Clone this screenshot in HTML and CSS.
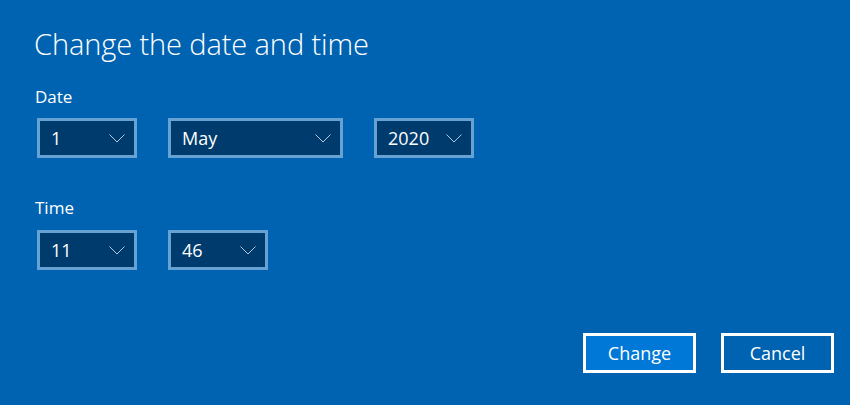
FILE: index.html
```html
<!DOCTYPE html>
<html lang="en">
<head>
<meta charset="utf-8">
<title>Change the date and time</title>
<link rel="stylesheet" href="styles.css">
</head>
<body>
<div class="dialog">
  <h1 class="title">Change the date and time</h1>
  <div class="label label-date">Date</div>
  <div class="row row-date">
    <div class="select w-day"><span>1</span><svg class="chev" width="16" height="9" viewBox="0 0 16 9"><polyline points="0.5,0.5 8,8 15.5,0.5"/></svg></div>
    <div class="select w-month"><span>May</span><svg class="chev" width="16" height="9" viewBox="0 0 16 9"><polyline points="0.5,0.5 8,8 15.5,0.5"/></svg></div>
    <div class="select w-year"><span>2020</span><svg class="chev" width="16" height="9" viewBox="0 0 16 9"><polyline points="0.5,0.5 8,8 15.5,0.5"/></svg></div>
  </div>
  <div class="label label-time">Time</div>
  <div class="row row-time">
    <div class="select w-day"><span>11</span><svg class="chev" width="16" height="9" viewBox="0 0 16 9"><polyline points="0.5,0.5 8,8 15.5,0.5"/></svg></div>
    <div class="select w-day"><span>46</span><svg class="chev" width="16" height="9" viewBox="0 0 16 9"><polyline points="0.5,0.5 8,8 15.5,0.5"/></svg></div>
  </div>
  <div class="actions">
    <button class="btn btn-primary">Change</button>
    <button class="btn">Cancel</button>
  </div>
</div>
</body>
</html>
```
FILE: styles.css
```css
html, body {
  margin: 0;
  padding: 0;
  background: #0063b1;
}
body {
  width: 850px;
  height: 405px;
  overflow: hidden;
  font-family: "Open Sans", "Noto Sans", "Liberation Sans", sans-serif;
  color: #ffffff;
}
.dialog {
  box-sizing: border-box;
  height: 405px;
  padding: 24px 16px 32px 37px;
  display: flex;
  flex-direction: column;
}
.title {
  margin: 0 0 0 -3px;
  font-size: 29px;
  font-weight: 300;
  line-height: 40px;
  letter-spacing: -0.1px;
}
.label {
  margin-left: -2px;
  font-size: 17px;
  line-height: 24px;
}
.label-date {
  margin-top: 21px;
}
.label-time {
  margin-top: 38px;
}
.row {
  display: flex;
  gap: 31px;
}
.row-date {
  margin-top: 9px;
}
.row-time {
  margin-top: 10px;
}
.select {
  box-sizing: border-box;
  height: 40px;
  border: 3px solid #67a2d5;
  background: #003b6d;
  display: flex;
  align-items: center;
  justify-content: space-between;
  padding: 0 9px 0 11px;
  font-size: 18px;
}
.w-day, .w-year {
  width: 100px;
}
.w-month {
  width: 175px;
}
.chev {
  display: block;
  fill: none;
  stroke: #b0c8df;
  stroke-width: 1;
}
.actions {
  margin-top: auto;
  display: flex;
  justify-content: flex-end;
  gap: 25px;
}
.btn {
  box-sizing: border-box;
  width: 113px;
  height: 40px;
  border: 3px solid #ffffff;
  background: transparent;
  color: #ffffff;
  font-family: inherit;
  font-size: 18px;
  padding: 0;
}
.btn-primary {
  background: #0078d7;
}
```
